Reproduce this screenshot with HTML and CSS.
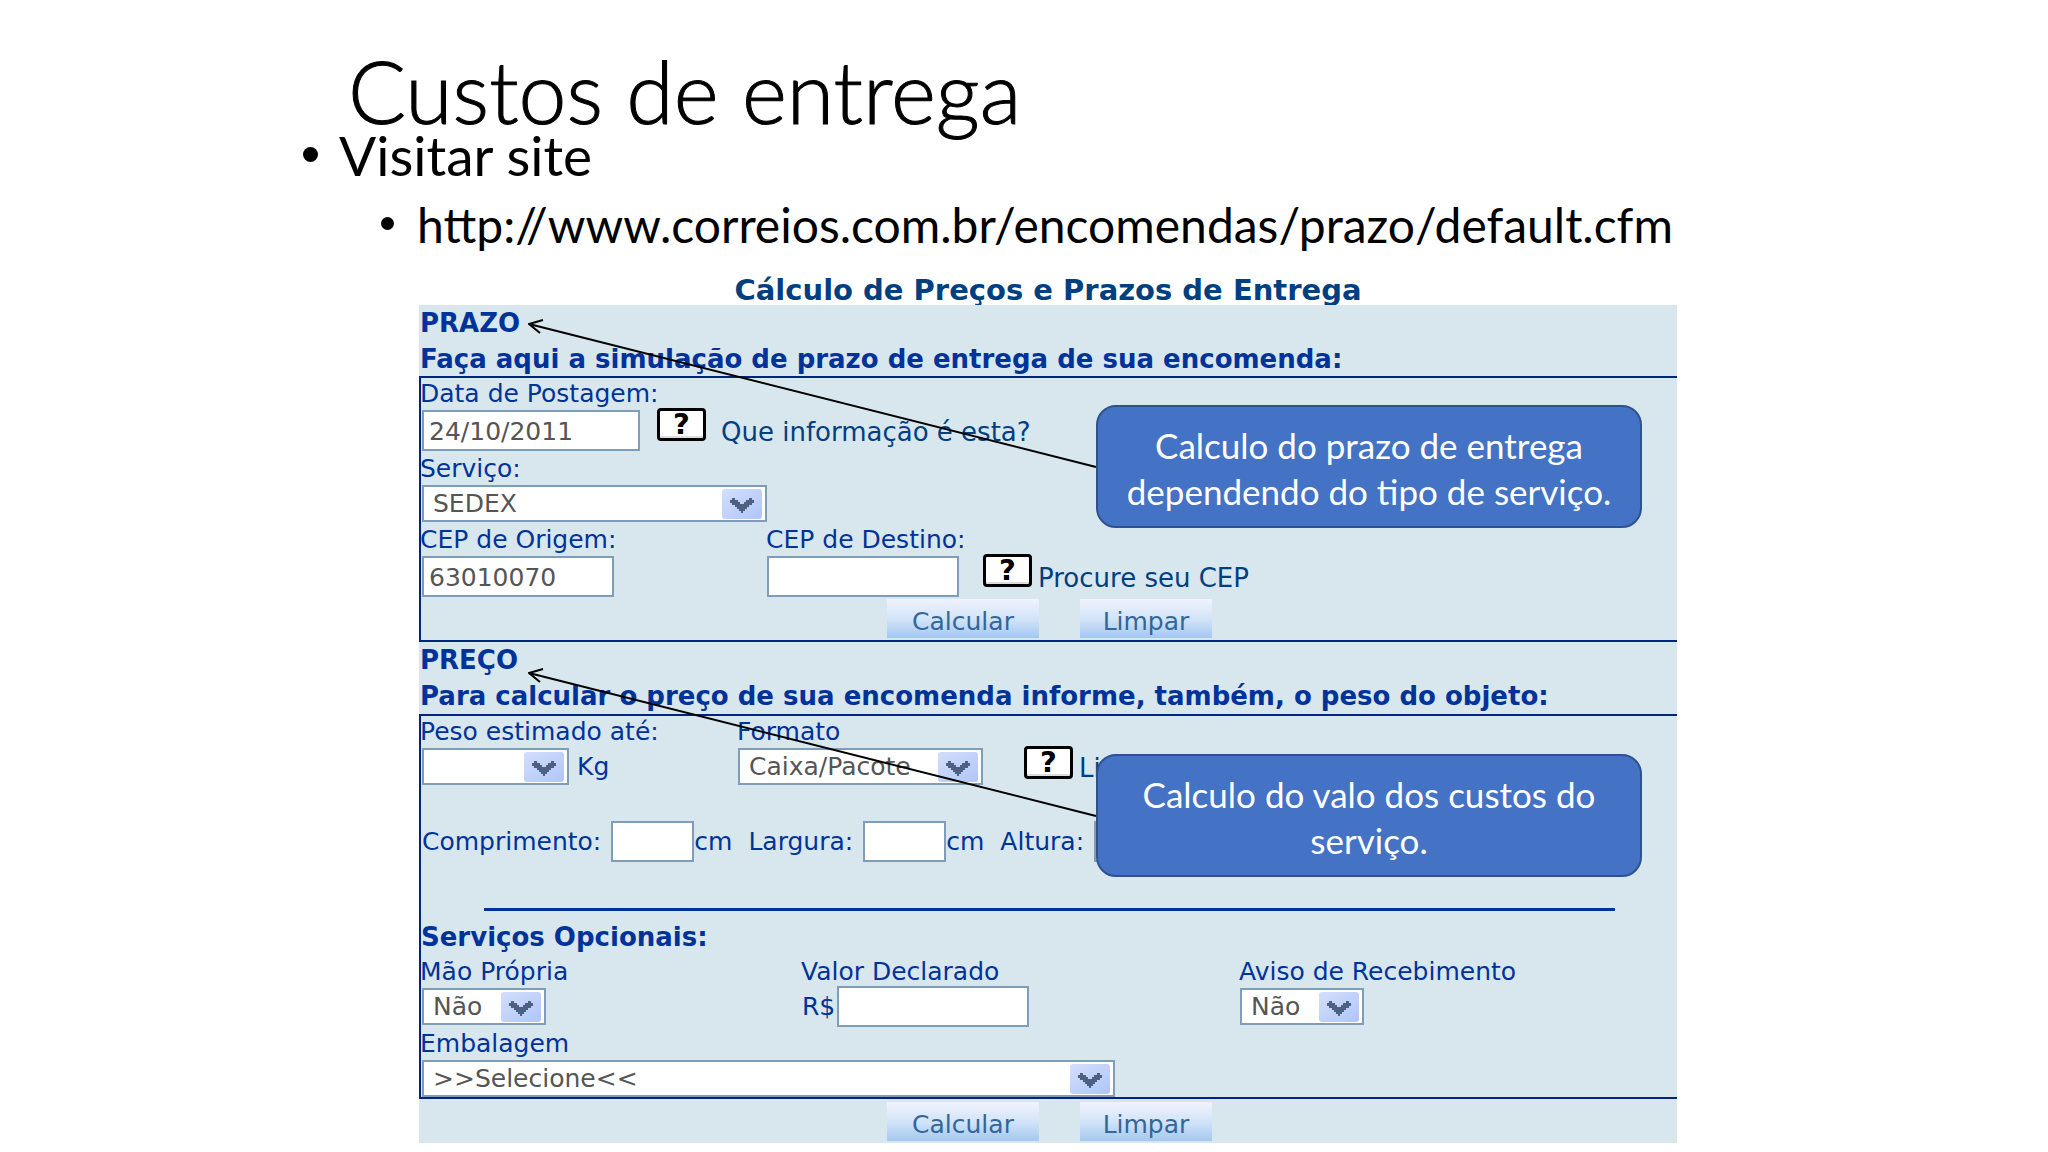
FILE: index.html
```html
<!DOCTYPE html>
<html lang="pt-BR">
<head>
<meta charset="utf-8">
<meta name="viewport" content="width=device-width, initial-scale=1">
<title>Custos de entrega</title>
<link rel="stylesheet" href="styles.css">
</head>
<body>
<svg class="defs" aria-hidden="true">
  <defs>
    <linearGradient id="knob" x1="0" y1="0" x2="1" y2="1">
      <stop offset="0" stop-color="#d3defc"/>
      <stop offset="1" stop-color="#b0c5f8"/>
    </linearGradient>
    <symbol id="arrow" viewBox="0 0 40 30">
      <rect width="40" height="30" rx="3" fill="url(#knob)"/>
      <path d="M10 9h3v2h3v2h2v2h4v-2h2v-2h3v-2h3v2h2v3h-2v2h-3v2h-2v2h-2v2h-2v2h-2v-2h-2v-2h-2v-2h-2v-2h-3v-2h-2v-3h2z" fill="#4d6185"/>
    </symbol>
  </defs>
</svg>
<main class="slide">
  <h1 class="slide-title">Custos de entrega</h1>
  <ul class="bullets">
    <li class="bullet">Visitar site
      <ul class="bullets-sub">
        <li class="bullet-sub">http://www.correios.com.br/encomendas/prazo/default.cfm</li>
      </ul>
    </li>
  </ul>

  <h2 class="form-title">Cálculo de Preços e Prazos de Entrega</h2>
  <form class="panel">
    <div class="section-head">
      <h3 class="heading">PRAZO</h3>
      <p class="heading">Faça aqui a simulação de prazo de entrega de sua encomenda:</p>
    </div>
    <section class="section term">
      <div class="field">
        <label class="label" for="data">Data de Postagem:</label>
        <div class="line">
          <input class="box box-date" id="data" type="text" value="24/10/2011">
          <button class="help help-date" type="button">?</button>
          <a class="link" href="#data">Que informação é esta?</a>
        </div>
      </div>
      <div class="field">
        <label class="label" for="servico">Serviço:</label>
        <span class="select select-service"><select id="servico"><option>SEDEX</option></select><svg><use href="#arrow"/></svg></span>
      </div>
      <div class="cols cols-zip">
        <div class="field">
          <label class="label" for="origem">CEP de Origem:</label>
          <input class="box" id="origem" type="text" value="63010070">
        </div>
        <div class="field">
          <label class="label flush" for="destino">CEP de Destino:</label>
          <div class="line">
            <input class="box" id="destino" type="text">
            <button class="help help-zip" type="button">?</button>
            <a class="link" href="#destino">Procure seu CEP</a>
          </div>
        </div>
      </div>
      <div class="actions">
        <button class="action" type="button">Calcular</button>
        <button class="action action-clear" type="button">Limpar</button>
      </div>
    </section>

    <div class="section-head">
      <h3 class="heading">PREÇO</h3>
      <p class="heading">Para calcular o preço de sua encomenda informe, também, o peso do objeto:</p>
    </div>
    <section class="section price">
      <div class="cols cols-weight">
        <div class="field">
          <label class="label" for="peso">Peso estimado até:</label>
          <div class="line">
            <span class="select select-weight"><select id="peso"><option></option></select><svg><use href="#arrow"/></svg></span>
            <span class="text unit">Kg</span>
          </div>
        </div>
        <div class="field">
          <label class="label flush" for="formato">Formato</label>
          <div class="line">
            <span class="select select-shape"><select id="formato"><option>Caixa/Pacote</option></select><svg><use href="#arrow"/></svg></span>
            <button class="help help-shape" type="button">?</button>
            <a class="link" href="#formato">Li</a>
          </div>
        </div>
      </div>
      <div class="sizes">
        <label class="size"><span class="size-name">Comprimento:</span><input class="box box-small" type="text">cm</label>
        <label class="size"><span class="size-name">Largura:</span><input class="box box-small" type="text">cm</label>
        <label class="size"><span class="size-name">Altura:</span><input class="box box-small" type="text"></label>
      </div>
      <hr class="rule">
      <h4 class="heading heading-options">Serviços Opcionais:</h4>
      <div class="cols cols-options">
        <div class="field">
          <label class="label" for="mao">Mão Própria</label>
          <span class="select select-yesno"><select id="mao"><option>Não</option></select><svg><use href="#arrow"/></svg></span>
        </div>
        <div class="field">
          <label class="label flush" for="valor">Valor Declarado</label>
          <div class="line line-value">
            <span class="text">R$</span>
            <input class="box" id="valor" type="text">
          </div>
        </div>
        <div class="field">
          <label class="label flush" for="aviso">Aviso de Recebimento</label>
          <span class="select select-yesno"><select id="aviso"><option>Não</option></select><svg><use href="#arrow"/></svg></span>
        </div>
      </div>
      <div class="field field-pack">
        <label class="label" for="embalagem">Embalagem</label>
        <span class="select select-pack"><select id="embalagem"><option>&gt;&gt;Selecione&lt;&lt;</option></select><svg><use href="#arrow"/></svg></span>
      </div>
    </section>
    <div class="actions actions-end">
      <button class="action" type="button">Calcular</button>
      <button class="action action-clear" type="button">Limpar</button>
    </div>

    <svg class="pointer pointer-term" viewBox="0 0 570 154" aria-hidden="true"><path d="M568 149L1 6M15 2L1 6L12 15"/></svg>
    <svg class="pointer pointer-price" viewBox="0 0 570 154" aria-hidden="true"><path d="M568 149L1 6M15 2L1 6L12 15"/></svg>
    <aside class="callout callout-term">Calculo do prazo de entrega dependendo do tipo de serviço.</aside>
    <aside class="callout callout-price">Calculo do valo dos custos do serviço.</aside>
  </form>
</main>
</body>
</html>
```
FILE: styles.css
```css
* { box-sizing: border-box; }

body {
  margin: 0;
  background: #fff;
  color: #000;
  font-family: "DejaVu Sans", sans-serif;
}

h1, h2, h3, h4, p, ul { margin: 0; padding: 0; }

.defs { position: absolute; width: 0; height: 0; }

/* Slide text */
.slide {
  max-width: 1536px;
  margin: 0 auto;
  padding: 51px 115px 8px 163px;
}

.slide-title {
  margin-left: -71px;
  font: 300 86px/80px Lato, sans-serif;
  -webkit-text-stroke: 1px #000;
}

.bullets, .bullets-sub { list-style: none; }

.bullets {
  margin-left: -80px;
  font: 400 55px/48px Lato, sans-serif;
}

.bullets-sub {
  margin: 22px 0 0 78px;
  font-size: 48px;
}

.bullet, .bullet-sub { position: relative; white-space: nowrap; }

.bullet::before, .bullet-sub::before {
  content: "";
  position: absolute;
  top: 16px;
  left: -36px;
  width: 15px;
  height: 15px;
  border-radius: 50%;
  background: #000;
}

.bullet-sub::before { width: 13px; height: 13px; }

.form-title {
  margin-top: 26px;
  color: #004080;
  font-size: 29px;
  line-height: 30px;
  text-align: center;
}

/* Form panel */
.panel {
  position: relative;
  background: #d8e7ed;
  color: #039;
  font-size: 25px;
  line-height: 30px;
}

.heading {
  padding-left: 1px;
  font-size: 26px;
  font-weight: 700;
  line-height: 36px;
  white-space: nowrap;
}

.section {
  padding-left: 1px;
  border: solid #00257a;
  border-width: 2px 0 2px 2px;
}

.term {
  display: flex;
  flex-direction: column;
  gap: 2px;
  margin-top: -1px;
  padding-bottom: 2px;
}

.field {
  display: flex;
  flex-direction: column;
  align-items: flex-start;
  gap: 2px;
}

.label {
  margin-left: -2px;
  padding-top: 2px;
  line-height: 28px;
}

.label.flush { margin-left: -1px; }

.line { display: flex; align-items: center; }
.cols { display: grid; }
.cols-zip { grid-template-columns: 345fr 910fr; }
.cols-weight { grid-template-columns: 316fr 939fr; }
.cols-options { grid-template-columns: 380fr 438fr 437fr; margin-top: 4px; }

.box, .select select {
  border: 2px solid #7f9db9;
  border-radius: 0;
  background: #fff;
  color: #555;
  font: inherit;
}

.box { width: 192px; height: 41px; padding: 2px 5px 0; }
.box-date { width: 218px; }
.box-small { width: 83px; }

.select { display: grid; height: 37px; }

.select > * { grid-area: 1 / 1; }

.select select {
  width: 100%;
  height: 37px;
  padding: 0 9px;
  appearance: none;
}

.select svg {
  align-self: center;
  justify-self: end;
  width: 40px;
  height: 30px;
  margin-right: 5px;
  pointer-events: none;
}

.select-service { width: 345px; }
.select-weight { width: 147px; }
.select-shape { width: 245px; }
.select-yesno { width: 124px; }
.select-pack { width: 693px; }

.help {
  align-self: flex-start;
  width: 49px;
  height: 33px;
  margin-top: -2px;
  padding: 0;
  border: 3px solid #000;
  border-radius: 4px;
  background: #fff;
  box-shadow: inset 0 -2px #ddd;
  color: #000;
  font: 700 29px/25px "DejaVu Sans", sans-serif;
}

.help-date { margin-left: 17px; margin-right: 15px; }
.help-zip { margin-left: 24px; margin-right: 6px; }
.help-shape { margin-left: 41px; margin-right: 6px; }

.link {
  padding-top: 2px;
  color: #004080;
  font-size: 26px;
  text-decoration: none;
  white-space: nowrap;
}

.unit { margin-left: 8px; }

.actions { display: flex; justify-content: center; gap: 41px; }

.action {
  width: 152px;
  height: 39px;
  padding: 6px 0 0;
  border: 0;
  background: linear-gradient(#f0f3fd, #d3e4f8 50%, #a3c8f0);
  color: #369;
  font: inherit;
}

.action-clear { width: 132px; }
.actions-end { padding: 3px 0 2px 3px; }

.sizes { display: flex; gap: 16px; margin-top: 36px; }
.size { display: flex; align-items: center; }
.size-name { margin-right: 10px; }

.rule {
  height: 3px;
  margin: 46px 62px 11px;
  border: 0;
  background: #039;
}

.heading-options { margin-left: -2px; line-height: 30px; }

.line-value { height: 37px; }
.line-value .box { margin-left: 2px; }
.field-pack { margin-top: 3px; }

/* Notes laid over the form */
.pointer {
  position: absolute;
  left: 109px;
  width: 570px;
  height: 154px;
  fill: none;
  stroke: #000;
  stroke-width: 2;
}

.pointer-term { top: 13px; }
.pointer-price { top: 362px; }

.callout {
  position: absolute;
  left: 677px;
  display: flex;
  align-items: center;
  justify-content: center;
  width: 546px;
  height: 123px;
  padding: 2px 16px 0;
  border: 2px solid #2f528f;
  border-radius: 20px;
  background: #4472c4;
  color: #fff;
  font: 400 35px/46px Lato, sans-serif;
  text-align: center;
}

.callout-term { top: 100px; }
.callout-price { top: 449px; }
```
